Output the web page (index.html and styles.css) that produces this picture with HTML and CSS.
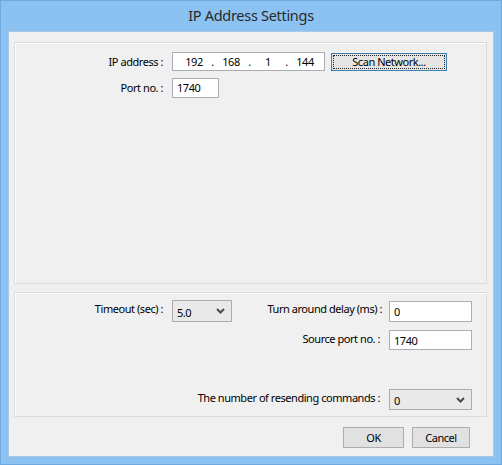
FILE: index.html
```html
<!DOCTYPE html>
<html>
<head>
<meta charset="utf-8">
<link rel="stylesheet" href="styles.css">
</head>
<body>
<div class="window">
  <div class="titlebar">IP Address Settings</div>
  <div class="content">
    <div class="group group-top">
      <div class="form-grid">
        <div class="label">IP address :</div>
        <div class="ip-row">
          <div class="ip-box">
            <span class="seg">192</span><span class="dot">.</span>
            <span class="seg">168</span><span class="dot">.</span>
            <span class="seg">1</span><span class="dot">.</span>
            <span class="seg">144</span>
          </div>
          <div class="btn btn-scan"><span class="focus">Scan Network...</span></div>
        </div>
        <div class="label">Port no. :</div>
        <div><div class="textbox port">1740</div></div>
      </div>
    </div>
    <div class="group group-bottom">
      <div class="comm-grid">
        <div class="label lab-top">Timeout (sec) :</div>
        <div class="combo timeout"><span>5.0</span><svg class="chev" width="9" height="6" viewBox="0 0 9 6"><path d="M1 1 L4.5 4.5 L8 1" fill="none" stroke="#4a4a4a" stroke-width="2"/></svg></div>
        <div class="label lab-top">Turn around delay (ms) :</div>
        <div class="textbox wide">0</div>

        <div class="label lab-top r2">Source port no. :</div>
        <div class="textbox wide r2 c4">1740</div>

        <div class="label lab-top r3">The number of resending commands :</div>
        <div class="combo wide r3 c4"><span>0</span><svg class="chev" width="9" height="6" viewBox="0 0 9 6"><path d="M1 1 L4.5 4.5 L8 1" fill="none" stroke="#4a4a4a" stroke-width="2"/></svg></div>
      </div>
    </div>
    <div class="actions">
      <div class="btn btn-ok">OK</div>
      <div class="btn btn-cancel">Cancel</div>
    </div>
  </div>
</div>
</body>
</html>
```
FILE: styles.css
```css
html, body {
  margin: 0;
  padding: 0;
}
body {
  font-family: "Noto Sans", "Open Sans", sans-serif;
  font-size: 11px;
  letter-spacing: -0.45px;
  color: #000;
  background: #8cc2f2;
}
.window {
  width: 502px;
  height: 465px;
  box-sizing: border-box;
  background: #8cc2f2;
  border: 1px solid #6fa9e0;
  padding: 0 7px 7px 7px;
  display: flex;
  flex-direction: column;
}
.titlebar {
  height: 30px;
  flex: none;
  display: flex;
  align-items: center;
  justify-content: center;
  font-size: 14.5px;
  letter-spacing: -0.3px;
  color: #2a2a2a;
  padding-bottom: 2px;
  box-sizing: border-box;
}
.content {
  flex: 1;
  background: #f0f0f0;
  border: 1px solid #a8c8e6;
  display: flex;
  flex-direction: column;
  padding: 10px 6px 0 5px;
}
.group {
  border: 1px solid #dcdcdc;
  box-shadow: inset 1px 1px 0 #fff;
  box-sizing: border-box;
}
.group-top {
  height: 242px;
}
.group-bottom {
  height: 125px;
  margin-top: 8px;
}
.label {
  text-align: right;
  white-space: nowrap;
  line-height: 16px;
}
.form-grid {
  display: grid;
  grid-template-columns: 148px auto;
  column-gap: 9px;
  row-gap: 7px;
  padding-top: 9px;
  align-items: center;
}
.ip-row {
  display: flex;
  align-items: center;
  gap: 6px;
}
.ip-box {
  width: 153px;
  height: 19px;
  box-sizing: border-box;
  background: #fff;
  border: 1px solid #abadb3;
  display: flex;
  align-items: center;
  padding-left: 7px;
}
.seg {
  width: 28px;
  text-align: center;
}
.dot {
  width: 9px;
  text-align: center;
}
.textbox {
  box-sizing: border-box;
  background: #fff;
  border: 1px solid #abadb3;
  height: 20px;
  line-height: 18px;
  padding-left: 4px;
}
.port {
  width: 47px;
}
.btn {
  box-sizing: border-box;
  background: #e1e1e1;
  border: 1px solid #adadad;
  display: flex;
  align-items: center;
  justify-content: center;
}
.btn-scan {
  width: 116px;
  height: 18px;
  border-color: #3c7fb1;
  padding: 1px;
  background: #e5e5e5;
}
.btn-scan .focus {
  flex: 1;
  align-self: stretch;
  border: 1px dotted #222;
  display: flex;
  align-items: center;
  justify-content: center;
}
.comm-grid {
  display: grid;
  grid-template-columns: 148px 60px 1fr 83px;
  grid-template-rows: 22px 20px 21px;
  column-gap: 9px;
  row-gap: 8px;
  padding: 7px 14px 0 0;
}
.comm-grid .label:nth-child(3) {
  margin-right: -2px;
}
.lab-top {
  align-self: start;
  padding-top: 1px;
}
.r2 { grid-row: 2; grid-column: 3; }
.r3 { grid-row: 3; grid-column: 1 / 4; margin-top: 31px; }
.c4 { grid-column: 4; }
.combo {
  box-sizing: border-box;
  background: #e9e9e9;
  border: 1px solid #acacac;
  display: flex;
  align-items: center;
  justify-content: space-between;
  padding: 2px 6px 0 4px;
}
.timeout {
  height: 22px;
}
.textbox.wide {
  height: 21px;
  line-height: 19px;
  margin-top: 1px;
}
.textbox.wide.r2 {
  margin-top: 0;
  height: 20px;
}
.combo.wide {
  height: 21px;
}
.chev {
  display: block;
  margin-top: -2px;
}
.actions {
  display: flex;
  justify-content: flex-end;
  gap: 8px;
  padding: 10px 17px 0 0;
}
.btn-ok {
  width: 61px;
  height: 21px;
}
.btn-cancel {
  width: 58px;
  height: 21px;
}
```
